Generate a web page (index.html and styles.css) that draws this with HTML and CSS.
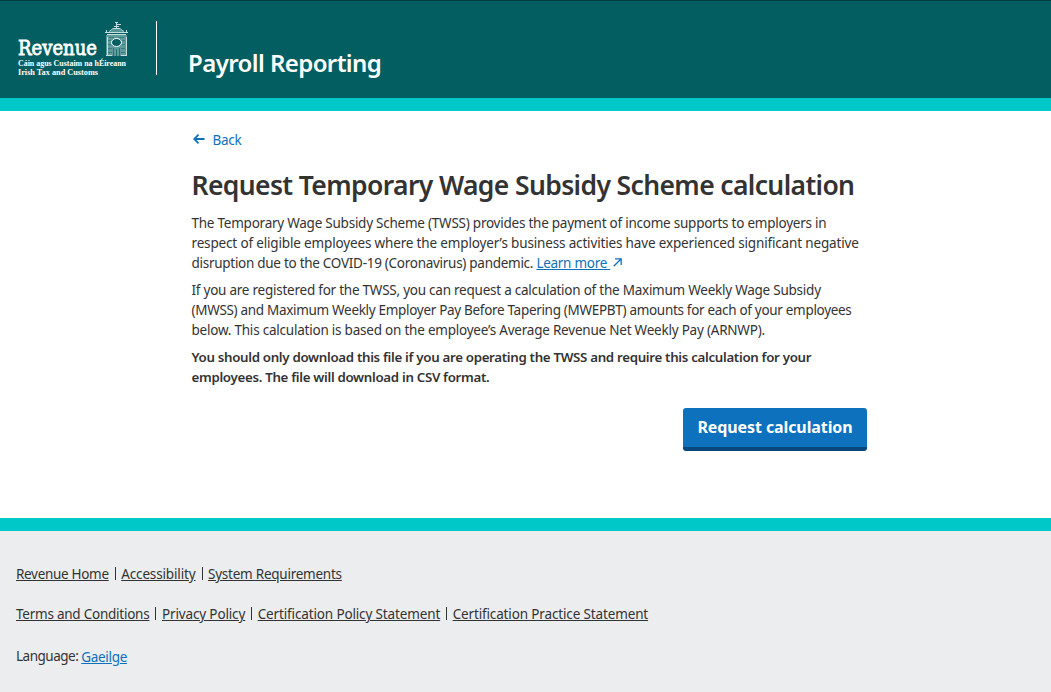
FILE: index.html
```html
<!DOCTYPE html>
<html lang="en">
<head>
<meta charset="utf-8">
<title>Payroll Reporting</title>
<link rel="stylesheet" href="styles.css">
</head>
<body>
<header class="site-header">
  <svg class="logo" width="112" height="58" viewBox="0 0 112 58" role="img" aria-label="Revenue">
    <g fill="#fff" class="logo-text">
      <text x="1" y="34" font-size="20" textLength="79" lengthAdjust="spacingAndGlyphs" class="logo-name">Revenue</text>
      <text x="1" y="44.700" font-size="8" textLength="108" lengthAdjust="spacingAndGlyphs">Cáin agus Custaim na hÉireann</text>
      <text x="1" y="53.700" font-size="8" textLength="80" lengthAdjust="spacingAndGlyphs">Irish Tax and Customs</text>
    </g>
    <path d="M89 14h21v21H89z" fill="#a9cbcc" fill-opacity=".55"/>
    <path d="M93 11l3-3h7l4 3z" fill="#a9cbcc" fill-opacity=".5"/>
    <g fill="none" stroke="#c5dddd" stroke-width="1">
      <path d="M99.500 7V2M98 1.500h3M99 3.500h5M97 5.500h5"/>
      <path d="M92 10.500q2-1 4-3M107 10.500q-2-1-4-3M96 7.500h7M88 11.500h23M90 13.500h19M89.500 9v2M109.500 9v2"/>
      <path d="M90.500 16v19M109.500 16v19M89 34.500h6M104 34.500h6"/>
    </g>
    <path d="M92 16.500h5M102 16.500h5M91 19.500h3M105 19.500h3M91 23.500h3M105 23.500h3M91 27.500h4M104 27.500h4M91 31.500h4M104 31.500h4" fill="none" stroke="#035e62" stroke-opacity=".45"/>
    <path d="M96.500 27v8M99.500 28v7M102.500 27v8" fill="none" stroke="#035e62" stroke-opacity=".6"/>
    <ellipse cx="99.500" cy="21.500" rx="5" ry="4" fill="#035e62" stroke="#fff"/>
  </svg>
  <div class="divider"></div>
  <div class="app-title">Payroll Reporting</div>
</header>
<main class="content">
  <a class="back" href="#"><svg width="12" height="10" viewBox="0 0 12 10" fill="none" stroke="currentColor" stroke-width="1.800"><path d="M11.500 5H1.500M5.500 .7L1.300 5l4.200 4.300"/></svg><span>Back</span></a>
  <h1>Request Temporary Wage Subsidy Scheme calculation</h1>
  <p>The Temporary Wage Subsidy Scheme (TWSS) provides the payment of income supports to employers in<br><span class="loose">respect of eligible employees where the employer’s business activities have experienced significant negative</span><br><span class="snug">disruption due to the COVID-19 (Coronavirus) pandemic. <a class="learn" href="#">Learn more&nbsp;</a></span><svg class="external" width="9" height="9" viewBox="0 0 9 9" fill="none" stroke="currentColor" stroke-width="1.300"><path d="M.7 8.300L8 1M2 .8h6.200V7"/></svg></p>
  <p>If you are registered for the TWSS, you can request a calculation of the Maximum Weekly Wage Subsidy<br><span class="tight">(MWSS) and Maximum Weekly Employer Pay Before Tapering (MWEPBT) amounts for each of your employees</span><br><span class="last">below. This calculation is based on the employee’s Average Revenue Net Weekly Pay (ARNWP).</span></p>
  <p class="strong">You should only download this file if you are operating the TWSS and require this calculation for your<br>employees. The file will download in CSV format.</p>
  <div class="actions"><button class="primary" type="button">Request calculation</button></div>
</main>
<footer class="site-footer">
  <nav class="links"><a class="tight" href="#">Revenue Home</a><i></i><a class="wide" href="#">Accessibility</a><i></i><a href="#">System Requirements</a></nav>
  <nav class="links"><a href="#">Terms and Conditions</a><i></i><a class="wide" href="#">Privacy Policy</a><i></i><a class="wide" href="#">Certification Policy Statement</a><i></i><a class="wide" href="#">Certification Practice Statement</a></nav>
  <div class="language"><span class="label">Language:</span><a class="tight" href="#">Gaeilge</a></div>
</footer>
</body>
</html>
```
FILE: styles.css
```css
* { box-sizing: border-box; }
body { margin: 0; font-family: "Noto Sans", sans-serif; font-size: 13.5px; line-height: 20px; letter-spacing: -.24px; color: #333; background: #fff; }
a { color: #0d71bd; }
.tight { letter-spacing: -.31px; }
.snug { letter-spacing: -.28px; }
.last { letter-spacing: -.22px; }
.loose { letter-spacing: -.157px; }
.wide { letter-spacing: -.14px; }
.site-header { display: flex; height: 111px; padding-left: 17px; background: #035e62; border-top: 1px solid #033c40; border-bottom: 13px solid #00c8c8; color: #fff; }
.logo { margin-top: 20px; overflow: visible; }
.logo-text { font-family: "Liberation Serif", serif; font-weight: 700; letter-spacing: 0; }
.logo-name { font-family: "DejaVu Serif", serif; font-weight: 400; stroke: #fff; stroke-width: .8; }
.divider { width: 1px; height: 54px; margin: 20px 0 0 27px; background: #fff; }
.app-title { margin: 45px 0 0 31px; font-size: 24px; line-height: 34px; font-weight: 600; letter-spacing: -.58px; white-space: nowrap; }
.content { height: 407px; width: 867px; padding: 19px 0 0 191.5px; white-space: nowrap; }
.back { display: flex; align-items: center; gap: 8px; height: 20px; padding-left: 1px; text-decoration: none; }
.back svg { margin-bottom: 2px; }
h1 { display: flex; align-items: center; height: 22px; margin: 24px 0 17px; font-size: 26.5px; line-height: 40px; font-weight: 600; letter-spacing: -.63px; }
p { margin: 0 0 7px; }
.strong { font-size: 13.3px; font-weight: 600; letter-spacing: -.315px; }
.external { color: #0d71bd; margin: 0 0 1px 3px; }
.actions { display: flex; justify-content: flex-end; margin-top: 21px; }
.primary { width: 184px; height: 43px; padding: 0 0 1px; border: 0; border-bottom: 4px solid #08477c; border-radius: 3px; background: #0d71bd; color: #fff; font: inherit; font-size: 16px; font-weight: 700; letter-spacing: -.1px; }
.site-footer { height: 174px; padding: 33px 16px 0; border-top: 13px solid #00c8c8; background: #ebedef; white-space: nowrap; }
.links { display: flex; align-items: center; height: 20px; margin-bottom: 20px; }
.links a { color: #333; }
.links i { width: 1px; height: 13px; margin: -2px 5.5px 0 6px; background: #333; }
.language { display: flex; gap: 3px; padding-top: 2px; }
.language .label { letter-spacing: -.5px; }
.language a { padding-top: 1px; }
```
